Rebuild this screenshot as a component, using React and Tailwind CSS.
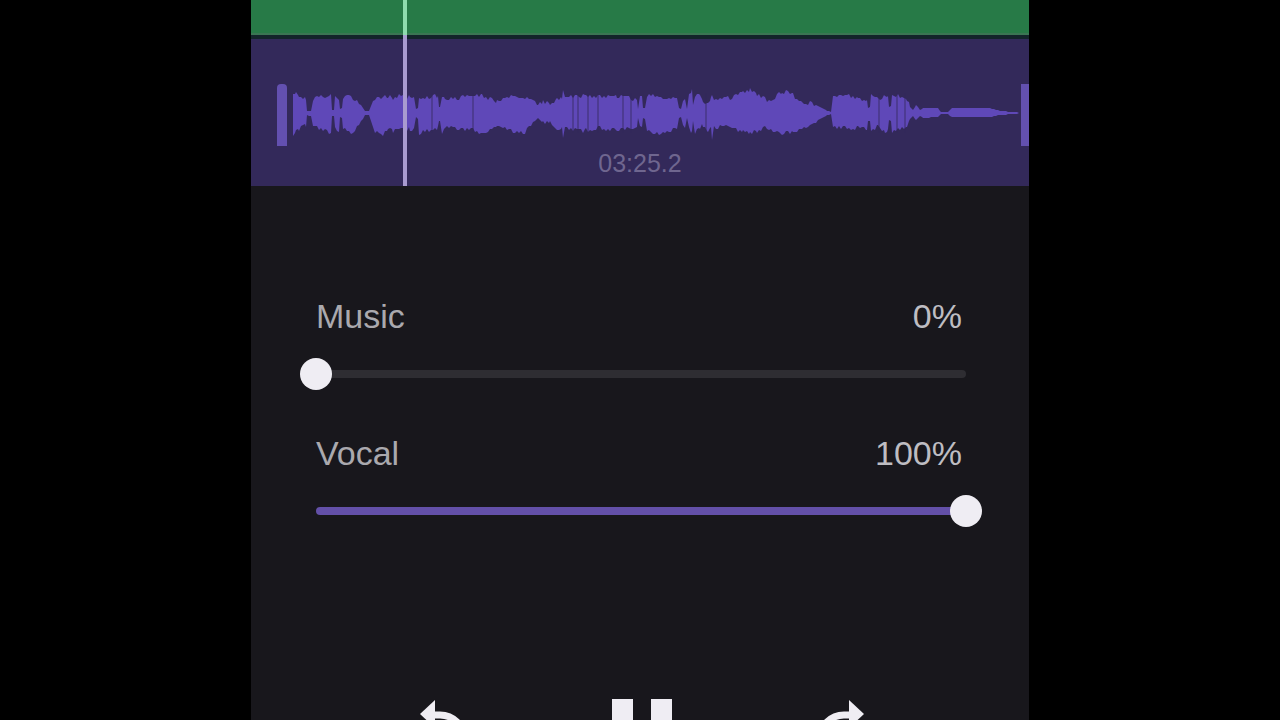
import React, { useState } from "react";

// [x, height above the middle, height below the middle]
const PEAKS = [
  [0, 21, 21], [3, 20, 19], [6, 17, 16], [10, 15, 13], [13, 14, 12], [14, 2, 2], [18, 2, 3],
  [20, 13, 13], [26, 16, 15], [32, 15, 18], [38, 17, 21], [39, 3, 3], [41, 3, 3], [42, 15, 15],
  [46, 13, 20], [47, 4, 4], [49, 5, 5], [50, 13, 16], [54, 18, 17], [58, 15, 22], [62, 14, 17],
  [66, 10, 13], [70, 5, 6], [72, 2, 2], [76, 2, 2], [78, 9, 8], [82, 15, 18], [86, 14, 20],
  [90, 18, 22], [95, 17, 16], [100, 14, 18], [106, 17, 17], [117, 16, 16], [121, 15, 17],
  [123, 4, 4], [125, 5, 6], [126, 16, 20], [130, 15, 19], [142, 17, 16], [145, 17, 15],
  [146, 6, 8], [147, 6, 8], [149, 16, 20], [152, 13, 14], [154, 14, 14], [164, 15, 16],
  [180, 17, 17], [189, 18, 20], [195, 15, 17], [204, 12, 13], [214, 14, 17], [220, 18, 18],
  [232, 15, 19], [240, 12, 11], [245, 8, 5], [250, 11, 9], [257, 10, 8], [264, 14, 16],
  [269, 15, 15], [270, 23, 23], [272, 15, 16], [288, 17, 16], [290, 17, 21], [293, 17, 17],
  [305, 16, 15], [324, 17, 17], [336, 15, 16], [344, 12, 16], [345, 4, 5], [347, 15, 15],
  [349, 16, 16], [350, 5, 5], [352, 5, 6], [354, 18, 17], [360, 17, 22], [370, 16, 19],
  [384, 14, 16], [386, 5, 5], [388, 4, 4], [390, 13, 13], [392, 14, 17], [394, 4, 5],
  [396, 18, 14], [399, 24, 20], [400, 8, 8], [402, 17, 19], [407, 17, 16], [410, 11, 12],
  [415, 11, 17], [418, 14, 15], [419, 20, 25], [421, 14, 14], [437, 15, 14], [450, 20, 19],
  [457, 23, 20], [464, 18, 18], [474, 13, 14], [480, 14, 17], [489, 22, 20], [500, 18, 19],
  [509, 11, 14], [517, 10, 12], [525, 7, 7], [534, 2, 2], [538, 1, 1], [540, 15, 15],
  [554, 18, 15], [565, 14, 15], [574, 12, 16], [575, 5, 8], [577, 6, 8], [578, 18, 20],
  [585, 13, 12], [592, 19, 20], [595, 18, 17], [596, 6, 9], [598, 7, 9], [599, 18, 18],
  [607, 17, 17], [614, 14, 12], [617, 6, 6], [620, 3, 3], [623, 8, 7], [627, 3, 3],
  [630, 5, 5], [645, 5, 4], [648, 1, 1], [655, 1, 1], [659, 5, 4], [677, 5, 4],
  [697, 5, 4], [707, 2, 2], [722, 1, 1], [728, 0, 0],
];

// quieter slots inside the loud parts
const DIPS = [138, 179, 279, 284, 294, 304, 329, 337, 412, 585, 603, 611];

const MIDDLE = 31;

function edge(side) {
  const points = [];
  for (let i = 0; i < PEAKS.length - 1; i++) {
    const [x0] = PEAKS[i];
    const [x1] = PEAKS[i + 1];
    const a = PEAKS[i][side];
    const b = PEAKS[i + 1][side];
    for (let x = x0; x < x1; x += 2) {
      const h = a + ((b - a) * (x - x0)) / (x1 - x0);
      const rough = h > 8 ? Math.sin(x * x * 12.9 + side * 4) * 2 : 0;
      points.push([x, Math.round(h + rough)]);
    }
  }
  return points;
}

function Waveform() {
  const top = edge(1).map(([x, h]) => `${x},${MIDDLE - h}`);
  const bottom = edge(2).map(([x, h]) => `${x},${MIDDLE + h}`).reverse();

  return (
    <svg viewBox="0 0 728 64" preserveAspectRatio="none" className="h-16 min-w-0 flex-1" aria-hidden="true">
      <polygon points={[...top, ...bottom].join(" ")} fill="#5f48b8" />
      {DIPS.map((x) => (
        <rect key={x} x={x} y="11" width="2" height="40" fill="#33295a" opacity="0.4" />
      ))}
    </svg>
  );
}

function VolumeSlider({ id, label, value, onChange }) {
  return (
    <div className="flex flex-col gap-[22px]">
      <div className="flex items-center justify-between pl-4 pr-5 text-[34px] leading-10">
        <label htmlFor={id} className="text-[#aaa9ae]">{label}</label>
        <output htmlFor={id} className="text-[#bebdc2]">{value}%</output>
      </div>
      <div className="grid items-center">
        <div className="col-start-1 row-start-1 mx-4 h-2 overflow-hidden rounded-sm bg-[#2e2d32]">
          <div className="h-full bg-[#6350a8]" style={{ width: `${value}%` }} />
        </div>
        <input
          id={id}
          type="range"
          min="0"
          max="100"
          value={value}
          onChange={(e) => onChange(Number(e.target.value))}
          className="z-10 col-start-1 row-start-1 h-8 w-full cursor-pointer appearance-none bg-transparent [&::-webkit-slider-thumb]:size-8 [&::-webkit-slider-thumb]:appearance-none [&::-webkit-slider-thumb]:rounded-full [&::-webkit-slider-thumb]:bg-[#efedf3]"
        />
      </div>
    </div>
  );
}

function TurnArrow({ className }) {
  return (
    <svg viewBox="0 0 48 68" className={className} aria-hidden="true">
      <path d="M0 15 15 1V29Z" fill="#efedf3" />
      <path d="M13 16H20A24 24 0 0 1 20 64H10" fill="none" stroke="#efedf3" strokeWidth="7" />
    </svg>
  );
}

function App() {
  const [music, setMusic] = useState(0);
  const [vocal, setVocal] = useState(100);
  const [playing, setPlaying] = useState(true);

  return (
    <div className="h-screen overflow-hidden bg-black font-['Liberation_Sans',Arial,sans-serif]">
      <main className="mx-auto min-h-full w-full max-w-[778px] bg-[#18171c]">
        <section className="relative" aria-label="Tracks">
          <div className="h-[35px] border-b-2 border-[#3b7553] bg-[#277a47]" />
          <div className="h-1 bg-[#13242a]" />
          <div className="flex h-[147px] flex-col items-center overflow-hidden bg-[#33295a] pt-[43px]">
            <div className="flex w-full items-end pl-[26px]">
              <div className="mr-1.5 h-[62px] w-2.5 rounded-t-sm bg-[#6350b0]" />
              <Waveform />
              <div className="h-[62px] w-2 bg-[#6350b0]" />
            </div>
            <span className="text-[25px] leading-[34px] text-[#6f668f]">03:25.2</span>
          </div>
          {/* playhead */}
          <div className="absolute bottom-0 left-[152px] top-0 w-1 bg-[#a99bd0]">
            <div className="h-[35px] bg-[#8fdcae]" />
          </div>
        </section>

        <section className="flex flex-col gap-[43px] pl-[49px] pr-[47px] pt-[110px]" aria-label="Volume">
          <VolumeSlider id="music" label="Music" value={music} onChange={setMusic} />
          <VolumeSlider id="vocal" label="Vocal" value={vocal} onChange={setVocal} />
        </section>

        <section className="flex items-start justify-between pl-[169px] pr-[165px] pt-[172px]" aria-label="Playback">
          <button type="button" aria-label="Back">
            <TurnArrow className="h-[68px] w-12" />
          </button>
          <button type="button" aria-label={playing ? "Pause" : "Play"} onClick={() => setPlaying(!playing)}>
            <svg viewBox="0 0 60 68" className="h-[68px] w-[60px]" aria-hidden="true">
              {playing ? (
                <path d="M0 0H21V68H0ZM39 0H60V68H39Z" fill="#efedf3" />
              ) : (
                <path d="M4 0 60 34 4 68Z" fill="#efedf3" />
              )}
            </svg>
          </button>
          <button type="button" aria-label="Forward">
            <TurnArrow className="h-[68px] w-12 -scale-x-100" />
          </button>
        </section>
      </main>
    </div>
  );
}

export default App;
